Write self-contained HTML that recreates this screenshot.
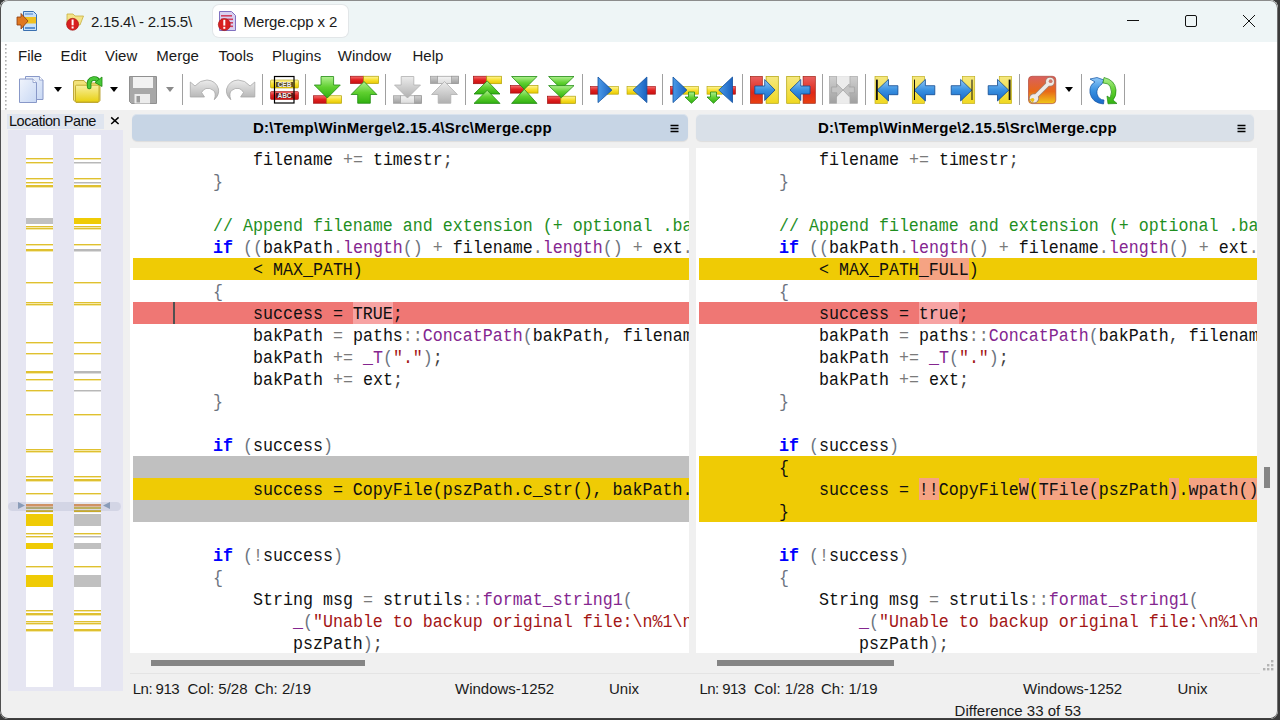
<!DOCTYPE html><html><head><meta charset="utf-8"><style>
*{box-sizing:border-box}
html,body{margin:0;padding:0;width:1280px;height:720px;overflow:hidden;background:#3a3a3a}
body{position:relative;font-family:"Liberation Sans",sans-serif}
.win{position:absolute;left:0;top:0;width:1278px;height:719px;background:#f0f0f0;border-radius:8px;overflow:hidden}
.frame{position:absolute;left:0;top:0;width:1278px;height:719px;border-radius:8px;border:1px solid #7a7a7a;border-top-color:#8c8c8c;border-bottom-color:#404040;border-right-color:#707070;border-left-color:#505050}
.abs{position:absolute}
.title{position:absolute;left:0;top:0;width:1280px;height:42px;background:#eef5f6}
.menu{position:absolute;left:0;top:42px;width:1280px;height:68px;background:#ffffff}
.mi{position:absolute;top:47px;font-size:15px;color:#1a1a1a;white-space:pre;line-height:18px}
.sep{position:absolute;top:74px;width:1px;height:31px;background:#a0a0a0}
.dd{position:absolute;top:87px;width:0;height:0;border-left:4.5px solid transparent;border-right:4.5px solid transparent;border-top:5px solid #000}
.code{position:absolute;background:#fff;overflow:hidden}
.band{position:absolute;left:3px;right:0;height:22px}
.wd{position:absolute;height:22px}
.caret{position:absolute;width:2px;height:22px;background:#505050}
.ln{position:absolute;height:22px;line-height:22px;font-family:"Liberation Mono",monospace;font-size:18.8px;white-space:pre;color:#101010;transform:scaleX(0.88638);transform-origin:0 0}
.ln i{font-style:normal}
.kw{color:#0000ff;font-weight:bold}
.op{color:#7a7a7a}
.sc{color:#404040}
.pr{color:#6c7480}
.fn{color:#84268f}
.cm{color:#1f8f1f}
.st{color:#a31515}
.id{color:#101010}
.dl .kw{color:#101010}
.hdr{position:absolute;top:114px;height:27px;border-radius:5px;box-shadow:inset 0 1px 0 rgba(255,255,255,0.35),0 1px 1px rgba(0,0,0,0.08);font-weight:bold;font-size:15px;letter-spacing:0.3px;line-height:28px;text-align:center;color:#000;white-space:pre;padding-right:15px}
.st1{position:absolute;font-size:15px;color:#1a1a1a;white-space:pre;line-height:18px}
</style></head><body><div class="win">
<div class="title"></div><div class="menu"></div>
<svg class="abs" style="left:0;top:0" width="360" height="42" viewBox="0 0 360 42"><path d="M23.5,11.5 H33.5 L36.5,14.5 V30.5 H23.5 Z" fill="#c8e0f8" stroke="#3a70b0" stroke-width="1"/><rect x="25" y="13" width="8" height="2" fill="#88b0e0"/><rect x="25" y="27" width="10" height="2" fill="#5a90d0"/><rect x="24" y="17" width="12" height="6.5" fill="#f0c020"/><path d="M17,17 H21 V13.5 L28,21 L21,29 V25 H17 Z" fill="#e07820" stroke="#8a3a10" stroke-width="0.8"/><path d="M67,14 H73 L75,16 H83.5 L80,25 H67 Z" fill="#f4e48a" stroke="#c8b040" stroke-width="0.8"/><circle cx="72.6" cy="24.3" r="6" fill="#d82020" stroke="#a01010" stroke-width="0.6"/><rect x="71.6" y="19.5" width="2" height="5.8" fill="#fff"/><rect x="71.6" y="26.5" width="2" height="2" fill="#fff"/></svg><div class="abs" style="left:212.5px;top:4.5px;width:135px;height:32.5px;background:#fff;border-radius:6px;box-shadow:0 0 0 1px #e2e6e8"></div><svg class="abs" style="left:0;top:0" width="360" height="42" viewBox="0 0 360 42"><path d="M219.5,11.5 H231.5 L235.5,15.5 V30.5 H219.5 Z" fill="#d8d0f0" stroke="#8070c0" stroke-width="1"/><rect x="221" y="15" width="11" height="1.6" fill="#d04060"/><rect x="221" y="18.5" width="12" height="1.6" fill="#d04060"/><rect x="226" y="22" width="7" height="1.6" fill="#d04060"/><rect x="226" y="25.5" width="7" height="1.6" fill="#d04060"/><circle cx="224.3" cy="24.6" r="6" fill="#d82020" stroke="#a01010" stroke-width="0.6"/><rect x="223.3" y="19.8" width="2" height="5.8" fill="#fff"/><rect x="223.3" y="26.8" width="2" height="2" fill="#fff"/></svg>
<div class="abs" style="left:91px;top:13px;font-size:15px;letter-spacing:-0.25px;line-height:18px;color:#1a1a1a;white-space:pre">2.15.4\ - 2.15.5\</div>
<div class="abs" style="left:243.5px;top:12.5px;font-size:15px;letter-spacing:-0.1px;line-height:18px;color:#1a1a1a;white-space:pre">Merge.cpp x 2</div>
<svg class="abs" style="left:1100px;top:0" width="180" height="42"><rect x="1127" y="20" width="12" height="1" fill="#111" transform="translate(-1100,0)"/><rect x="85.5" y="15.5" width="11" height="11" rx="1.5" fill="none" stroke="#111" stroke-width="1"/><path d="M143,15 L155,27 M155,15 L143,27" stroke="#111" stroke-width="1"/></svg>
<svg class="abs" style="left:0;top:0" width="1280" height="110" viewBox="0 0 1280 110">
<defs>
<linearGradient id="gRed" x1="0" y1="0" x2="0" y2="1"><stop offset="0" stop-color="#f57070"/><stop offset="0.5" stop-color="#e02020"/><stop offset="1" stop-color="#c81010"/></linearGradient>
<linearGradient id="gYel" x1="0" y1="0" x2="0" y2="1"><stop offset="0" stop-color="#fff59a"/><stop offset="0.5" stop-color="#f8e030"/><stop offset="1" stop-color="#e8c800"/></linearGradient>
<linearGradient id="gRedV" x1="0" y1="0" x2="0" y2="1"><stop offset="0" stop-color="#e86060"/><stop offset="0.6" stop-color="#e02818"/><stop offset="1" stop-color="#e84010"/></linearGradient>
<linearGradient id="gYelV" x1="0" y1="0" x2="0" y2="1"><stop offset="0" stop-color="#f5e880"/><stop offset="1" stop-color="#f0d820"/></linearGradient>
<linearGradient id="gGreen" x1="0" y1="0" x2="0" y2="1"><stop offset="0" stop-color="#b0f090"/><stop offset="0.5" stop-color="#60d030"/><stop offset="1" stop-color="#30b010"/></linearGradient>
<linearGradient id="gBlue" x1="0" y1="0" x2="0" y2="1"><stop offset="0" stop-color="#90c8f8"/><stop offset="0.5" stop-color="#3890e0"/><stop offset="1" stop-color="#1868c8"/></linearGradient>
<linearGradient id="gBlueH" x1="0" y1="0" x2="1" y2="0"><stop offset="0" stop-color="#4a9ae8"/><stop offset="1" stop-color="#1a62c0"/></linearGradient>
<linearGradient id="gGray" x1="0" y1="0" x2="0" y2="1"><stop offset="0" stop-color="#d0d0d0"/><stop offset="1" stop-color="#a0a0a0"/></linearGradient>
<linearGradient id="gGrayL" x1="0" y1="0" x2="0" y2="1"><stop offset="0" stop-color="#f4f4f4"/><stop offset="1" stop-color="#dcdcdc"/></linearGradient>
<linearGradient id="gGrayA" x1="0" y1="0" x2="0" y2="1"><stop offset="0" stop-color="#ececec"/><stop offset="1" stop-color="#b0b0b0"/></linearGradient>
<linearGradient id="gTools" x1="0" y1="0" x2="0" y2="1"><stop offset="0" stop-color="#d86060"/><stop offset="0.55" stop-color="#e86818"/><stop offset="1" stop-color="#f0c818"/></linearGradient>
<linearGradient id="gDoc" x1="0" y1="0" x2="1" y2="1"><stop offset="0" stop-color="#f0f4fc"/><stop offset="1" stop-color="#c8d8f4"/></linearGradient>
<linearGradient id="gFold" x1="0" y1="0" x2="0" y2="1"><stop offset="0" stop-color="#f8f0a0"/><stop offset="1" stop-color="#e8d010"/></linearGradient>
</defs><path d="M25.5,76.5 H39.5 L43,80 V99.5 H25.5 Z" fill="url(#gDoc)" stroke="#8898c8" stroke-width="1"/><path d="M39.5,76.5 V80 H43" fill="#fff" stroke="#8898c8" stroke-width="0.8"/><path d="M19.5,79 H33 L36.5,82.5 V102.5 H19.5 Z" fill="url(#gDoc)" stroke="#8898c8" stroke-width="1"/><path d="M33,79 V82.5 H36.5" fill="#fff" stroke="#8898c8" stroke-width="0.8"/><path d="M73.5,82 Q73.5,80.5 75,80.5 H84 L86,83 H98.5 Q100,83 100,84.5 V100.5 L98,102.5 H76 L73.5,100 Z" fill="#f2e27a" stroke="#b8a030" stroke-width="0.9"/><rect x="75.5" y="85.2" width="23.5" height="16.8" rx="1" fill="url(#gFold)" stroke="#c0a828" stroke-width="0.9"/><path d="M89.2,87 Q88,79.5 93.5,78.5 Q97.5,78 98.5,82" fill="none" stroke="#208a10" stroke-width="4.6" stroke-linecap="round"/><path d="M89.2,87 Q88,79.5 93.5,78.5 Q97.5,78 98.5,82" fill="none" stroke="#48c838" stroke-width="3" stroke-linecap="round"/><polygon points="95,82.5 102,77 102,86.5" fill="#48c838" stroke="#208a10" stroke-width="0.8" stroke-linejoin="round"/><path d="M129.5,76.5 H156.5 V103.5 H131.5 L129.5,101.5 Z" fill="#a8a8a8" stroke="#909090" stroke-width="1"/><rect x="133" y="77" width="20" height="11" fill="#f2f2f2"/><rect x="134.5" y="94" width="15.5" height="9.5" fill="#ececec"/><rect x="136.5" y="96" width="3.5" height="6.5" fill="#9a9a9a"/><path d="M190.3,82 L195,86 Q200,80 207,80 Q216,80.5 218.5,89 Q219.5,95 214.3,99.7 Q216.5,93 213.5,90.5 Q210,87.5 206,88.5 Q203,89.5 201.6,92.5 L204.5,97 L190.3,97 Z" fill="url(#gGrayA)" stroke="#a8a8a8" stroke-width="0.8"/><path d="M190.3,82 L195,86 Q200,80 207,80 Q216,80.5 218.5,89 Q219.5,95 214.3,99.7 Q216.5,93 213.5,90.5 Q210,87.5 206,88.5 Q203,89.5 201.6,92.5 L204.5,97 L190.3,97 Z" transform="translate(445.1,0) scale(-1,1)" fill="url(#gGrayA)" stroke="#a8a8a8" stroke-width="0.8"/><rect x="270.5" y="80" width="28" height="8" rx="1" fill="url(#gYel)" stroke="#b0a000" stroke-width="0.6"/><rect x="270.5" y="91.5" width="28" height="8" rx="1" fill="url(#gRed)" stroke="#a01010" stroke-width="0.6"/><rect x="276" y="82" width="17" height="5" fill="#605020"/><rect x="276" y="93" width="17" height="5" fill="#601818"/><text x="284.5" y="87" font-family="Liberation Sans" font-weight="bold" font-size="6.5" fill="#f0f0f0" text-anchor="middle">CEB</text><text x="284.5" y="98.3" font-family="Liberation Sans" font-weight="bold" font-size="6.5" fill="#f0f0f0" text-anchor="middle">ABC</text><rect x="274.5" y="76.5" width="19.5" height="26.5" fill="none" stroke="#000" stroke-width="1.2"/><rect x="313.5" y="95.75" width="13.25" height="7.5" fill="url(#gRed)" stroke="#a01010" stroke-width="0.7"/><rect x="326.75" y="95.75" width="14.75" height="7.5" fill="url(#gYel)" stroke="#b0a000" stroke-width="0.7"/><polygon points="321.0,76.5 333.6,76.5 333.6,85 340.3,85 327.3,98 314.3,85 321.0,85" fill="url(#gGreen)" stroke="#208a10" stroke-width="0.8" stroke-linejoin="round"/><rect x="350.5" y="76.25" width="13.100000000000023" height="7.25" fill="url(#gRed)" stroke="#a01010" stroke-width="0.7"/><rect x="363.6" y="76.25" width="14.899999999999977" height="7.25" fill="url(#gYel)" stroke="#b0a000" stroke-width="0.7"/><polygon points="364,81.5 376.9,94.5 370.3,94.5 370.3,103.25 357.7,103.25 357.7,94.5 351.1,94.5" fill="url(#gGreen)" stroke="#208a10" stroke-width="0.8" stroke-linejoin="round"/><rect x="393.5" y="95.75" width="7.0" height="7.5" fill="url(#gGray)" stroke="#9a9a9a" stroke-width="0.7"/><rect x="400.5" y="95.75" width="21.0" height="7.5" fill="url(#gGrayL)" stroke="#9a9a9a" stroke-width="0.7"/><rect x="414.5" y="95.75" width="7" height="7.5" fill="url(#gGray)" stroke="#9a9a9a" stroke-width="0.7"/><polygon points="401.2,76.5 413.8,76.5 413.8,85 420.5,85 407.5,98 394.5,85 401.2,85" fill="url(#gGrayA)" stroke="#b0b0b0" stroke-width="0.8" stroke-linejoin="round"/><rect x="430.5" y="76.25" width="7.0" height="7.25" fill="url(#gGray)" stroke="#9a9a9a" stroke-width="0.7"/><rect x="437.5" y="76.25" width="21.0" height="7.25" fill="url(#gGrayL)" stroke="#9a9a9a" stroke-width="0.7"/><rect x="451.5" y="76.25" width="7" height="7.25" fill="url(#gGray)" stroke="#9a9a9a" stroke-width="0.7"/><polygon points="444.5,81.5 457.4,94.5 450.8,94.5 450.8,103.25 438.2,103.25 438.2,94.5 431.6,94.5" fill="url(#gGrayA)" stroke="#b0b0b0" stroke-width="0.8" stroke-linejoin="round"/><rect x="473.5" y="76.25" width="13.199999999999989" height="7.450000000000003" fill="url(#gRed)" stroke="#a01010" stroke-width="0.7"/><rect x="486.7" y="76.25" width="14.800000000000011" height="7.450000000000003" fill="url(#gYel)" stroke="#b0a000" stroke-width="0.7"/><polygon points="487.2,80.9 500,94 474,94" fill="url(#gGreen)" stroke="#208a10" stroke-width="0.8" stroke-linejoin="round"/><polygon points="487.2,90.3 500,103.4 474,103.4" fill="url(#gGreen)" stroke="#208a10" stroke-width="0.8" stroke-linejoin="round"/><rect x="510.5" y="85.6" width="13.5" height="7.5" fill="url(#gRed)" stroke="#a01010" stroke-width="0.7"/><rect x="524" y="85.6" width="14" height="7.5" fill="url(#gYel)" stroke="#b0a000" stroke-width="0.7"/><polygon points="511.6,76.5 537,76.5 524.3,89.3" fill="url(#gGreen)" stroke="#208a10" stroke-width="0.8" stroke-linejoin="round"/><polygon points="524.3,89.3 537,103.4 511.6,103.4" fill="url(#gGreen)" stroke="#208a10" stroke-width="0.8" stroke-linejoin="round"/><rect x="547.5" y="96.2" width="13.299999999999955" height="7.200000000000003" fill="url(#gRed)" stroke="#a01010" stroke-width="0.7"/><rect x="560.8" y="96.2" width="14.700000000000045" height="7.200000000000003" fill="url(#gYel)" stroke="#b0a000" stroke-width="0.7"/><polygon points="548.6,76.5 574,76.5 561.25,88.9" fill="url(#gGreen)" stroke="#208a10" stroke-width="0.8" stroke-linejoin="round"/><polygon points="548.6,85.6 574,85.6 561.25,97.8" fill="url(#gGreen)" stroke="#208a10" stroke-width="0.8" stroke-linejoin="round"/><rect x="590.5" y="86.4" width="12" height="7.8" fill="url(#gRed)" stroke="#a01010" stroke-width="0.6"/><rect x="607" y="86.4" width="11.5" height="7.8" fill="url(#gYel)" stroke="#b0a000" stroke-width="0.6"/><polygon points="598,77 611.9,90.1 598,102.6" fill="url(#gBlueH)" stroke="#1050a0" stroke-width="0.8" stroke-linejoin="round"/><rect x="627" y="86.4" width="11.5" height="7.8" fill="url(#gYel)" stroke="#b0a000" stroke-width="0.6"/><rect x="643" y="86.4" width="12.5" height="7.8" fill="url(#gRed)" stroke="#a01010" stroke-width="0.6"/><polygon points="646.9,77 633.1,90.1 646.9,102.6" fill="url(#gBlueH)" stroke="#1050a0" stroke-width="0.8" stroke-linejoin="round"/><rect x="670.5" y="86.4" width="8" height="7.8" fill="url(#gRed)" stroke="#a01010" stroke-width="0.6"/><rect x="683" y="86.4" width="15.5" height="7.8" fill="url(#gYel)" stroke="#b0a000" stroke-width="0.6"/><polygon points="673,77 686.9,90.1 673,102.6" fill="url(#gBlueH)" stroke="#1050a0" stroke-width="0.8" stroke-linejoin="round"/><polygon points="688.5,92 694.5,92 694.5,97 698.0,97 691.5,103.3 685.0,97 688.5,97" fill="url(#gGreen)" stroke="#208a10" stroke-width="0.8" stroke-linejoin="round"/><rect x="707" y="86.4" width="15.5" height="7.8" fill="url(#gYel)" stroke="#b0a000" stroke-width="0.6"/><rect x="728" y="86.4" width="7.5" height="7.8" fill="url(#gRed)" stroke="#a01010" stroke-width="0.6"/><polygon points="732.5,77 718.75,90.1 732.5,102.6" fill="url(#gBlueH)" stroke="#1050a0" stroke-width="0.8" stroke-linejoin="round"/><polygon points="710.5,92 716.5,92 716.5,97 720.0,97 713.5,103.3 707.0,97 710.5,97" fill="url(#gGreen)" stroke="#208a10" stroke-width="0.8" stroke-linejoin="round"/><rect x="750.5" y="76.5" width="11.8" height="26.8" fill="url(#gRedV)" stroke="#a02010" stroke-width="0.7"/><rect x="766.1" y="76.5" width="12.2" height="26.8" fill="url(#gYelV)" stroke="#b0a000" stroke-width="0.7"/><polygon points="754.8,86 764.7,86 764.7,79.5 775,90 764.7,100.5 764.7,94 754.8,94" fill="url(#gBlue)" stroke="#104a90" stroke-width="0.8" stroke-linejoin="round"/><rect x="786.7" y="76.5" width="13.1" height="26.8" fill="url(#gYelV)" stroke="#b0a000" stroke-width="0.7"/><rect x="803.1" y="76.5" width="12.2" height="26.8" fill="url(#gRedV)" stroke="#a02010" stroke-width="0.7"/><polygon points="810,86 800.8,86 800.8,79.5 790,90 800.8,100.5 800.8,94 810,94" fill="url(#gBlue)" stroke="#104a90" stroke-width="0.8" stroke-linejoin="round"/><rect x="836.6" y="76.5" width="13.4" height="26.8" fill="#ececec" stroke="#dcdcdc" stroke-width="0.6"/><rect x="829.5" y="76.5" width="7.1" height="26.8" fill="url(#gGray)" stroke="#a8a8a8" stroke-width="0.7"/><rect x="850" y="76.5" width="7.5" height="26.8" fill="url(#gGray)" stroke="#a8a8a8" stroke-width="0.7"/><polygon points="831.6,87 836.8,87 836.8,84 843,90 836.8,96.5 836.8,92.75 831.6,92.75" fill="#c4c4c4" stroke="#a0a0a0" stroke-width="0.7" stroke-linejoin="round"/><polygon points="854.4,87 849.2,87 849.2,84 843,90 849.2,96.5 849.2,92.75 854.4,92.75" fill="#c4c4c4" stroke="#a0a0a0" stroke-width="0.7" stroke-linejoin="round"/><rect x="875" y="76.5" width="12.299999999999955" height="27" fill="url(#gYelV)" stroke="#c0b020" stroke-width="0.7"/><polygon points="897.9,85.7 888.5,85.7 888.5,79.4 877.1,90.2 888.5,101.0 888.5,94.7 897.9,94.7" fill="url(#gBlue)" stroke="#104a90" stroke-width="0.8" stroke-linejoin="round"/><rect x="876" y="79.6" width="1.8" height="20.4" fill="#101010"/><rect x="912.3" y="76.5" width="12.200000000000045" height="27" fill="url(#gYelV)" stroke="#c0b020" stroke-width="0.7"/><polygon points="934.8,85.7 925.4,85.7 925.4,79.4 914.3,90.2 925.4,101.0 925.4,94.7 934.8,94.7" fill="url(#gBlue)" stroke="#104a90" stroke-width="0.8" stroke-linejoin="round"/><rect x="914" y="79.6" width="1" height="20.4" fill="#101010"/><rect x="962.4" y="76.5" width="12.300000000000068" height="27" fill="url(#gYelV)" stroke="#c0b020" stroke-width="0.7"/><polygon points="951.2,85.7 960.6,85.7 960.6,79.4 971.75,90.2 960.6,101.0 960.6,94.7 951.2,94.7" fill="url(#gBlue)" stroke="#104a90" stroke-width="0.8" stroke-linejoin="round"/><rect x="971.5" y="79.6" width="1" height="20.4" fill="#101010"/><rect x="999.3" y="76.5" width="12.300000000000068" height="27" fill="url(#gYelV)" stroke="#c0b020" stroke-width="0.7"/><polygon points="988.2,85.7 997.5,85.7 997.5,79.4 1008.7,90.2 997.5,101.0 997.5,94.7 988.2,94.7" fill="url(#gBlue)" stroke="#104a90" stroke-width="0.8" stroke-linejoin="round"/><rect x="1008.7" y="79.6" width="1.8" height="20.4" fill="#101010"/><rect x="1028.5" y="76.3" width="27.3" height="27.3" rx="3.5" fill="url(#gTools)" stroke="#b04838" stroke-width="0.7"/><path d="M1035,97 L1049.5,82.5" stroke="#a08070" stroke-width="5" stroke-linecap="round"/><circle cx="1050" cy="81.8" r="4.8" fill="#a08070"/><circle cx="1034" cy="98.4" r="5" fill="#a08070"/><path d="M1035,97 L1049.5,82.5" stroke="#eeeae6" stroke-width="3.6" stroke-linecap="round"/><circle cx="1050" cy="81.8" r="4" fill="#eeeae6"/><circle cx="1034" cy="98.4" r="4.2" fill="#eeeae6"/><circle cx="1050.6" cy="81.2" r="1.9" fill="#d07868"/><path d="M1029.5,99 L1033.5,98.8 L1033.2,103 Z" fill="#f0c018"/><circle cx="1032.6" cy="99.8" r="1.8" fill="#f0c018"/><path d="M1097,77.5 L1104,80 L1102,84 Q1096,88 1097,94 Q1099,100 1104,100 L1103.5,104 Q1092,103 1090,93 Q1089,85 1095,82 L1090,79 Z" fill="url(#gBlue)" stroke="#1050a0" stroke-width="0.7"/><path d="M1104,77.5 Q1115,80 1116,90 Q1116.5,96 1113,100 L1117,103.5 L1108,103.8 L1107,96 L1110,98 Q1113,92 1110,86 Q1108,83 1103,83 Z" fill="url(#gGreen)" stroke="#208a10" stroke-width="0.7"/></svg>
<svg class="abs" style="left:0;top:0" width="20" height="112"><rect x="5" y="44" width="1.6" height="1.6" fill="#b0b0b0"/><rect x="5" y="48" width="1.6" height="1.6" fill="#b0b0b0"/><rect x="5" y="52" width="1.6" height="1.6" fill="#b0b0b0"/><rect x="5" y="56" width="1.6" height="1.6" fill="#b0b0b0"/><rect x="5" y="60" width="1.6" height="1.6" fill="#b0b0b0"/><rect x="5" y="64" width="1.6" height="1.6" fill="#b0b0b0"/><rect x="5" y="68" width="1.6" height="1.6" fill="#b0b0b0"/><rect x="5" y="72" width="1.6" height="1.6" fill="#b0b0b0"/><rect x="5" y="76" width="1.6" height="1.6" fill="#b0b0b0"/><rect x="5" y="80" width="1.6" height="1.6" fill="#b0b0b0"/><rect x="5" y="84" width="1.6" height="1.6" fill="#b0b0b0"/><rect x="5" y="88" width="1.6" height="1.6" fill="#b0b0b0"/><rect x="5" y="92" width="1.6" height="1.6" fill="#b0b0b0"/><rect x="5" y="96" width="1.6" height="1.6" fill="#b0b0b0"/><rect x="5" y="100" width="1.6" height="1.6" fill="#b0b0b0"/><rect x="5" y="104" width="1.6" height="1.6" fill="#b0b0b0"/><rect x="5" y="108" width="1.6" height="1.6" fill="#b0b0b0"/></svg>
<svg class="abs" style="left:1258px;top:655px" width="20" height="20"><rect x="13" y="5" width="2.4" height="2.4" fill="#b4b4b4"/><rect x="9" y="9" width="2.4" height="2.4" fill="#b4b4b4"/><rect x="13" y="9" width="2.4" height="2.4" fill="#b4b4b4"/><rect x="5" y="13" width="2.4" height="2.4" fill="#b4b4b4"/><rect x="9" y="13" width="2.4" height="2.4" fill="#b4b4b4"/><rect x="13" y="13" width="2.4" height="2.4" fill="#b4b4b4"/></svg>
<div class="mi" style="left:18px">File</div>
<div class="mi" style="left:60.5px">Edit</div>
<div class="mi" style="left:105px">View</div>
<div class="mi" style="left:156.3px">Merge</div>
<div class="mi" style="left:218.5px">Tools</div>
<div class="mi" style="left:272px">Plugins</div>
<div class="mi" style="left:337.8px">Window</div>
<div class="mi" style="left:412.5px">Help</div>
<div class="sep" style="left:182px"></div>
<div class="sep" style="left:262px"></div>
<div class="sep" style="left:305px"></div>
<div class="sep" style="left:385px"></div>
<div class="sep" style="left:465px"></div>
<div class="sep" style="left:582px"></div>
<div class="sep" style="left:662px"></div>
<div class="sep" style="left:742px"></div>
<div class="sep" style="left:822px"></div>
<div class="sep" style="left:865px"></div>
<div class="sep" style="left:1019px"></div>
<div class="sep" style="left:1081px"></div>
<div class="sep" style="left:1124px"></div>
<div class="dd" style="left:54px"></div>
<div class="dd" style="left:110px"></div>
<div class="dd" style="left:166px;border-top-color:#8a8a8a"></div>
<div class="dd" style="left:1065px"></div>
<div class="abs" style="left:8px;top:130px;width:115px;height:561px;background:#e6e6f2"></div>
<div class="abs" style="left:7px;top:113.5px;width:97px;height:15px;background:#dfe5ef"></div>
<div class="abs" style="left:9px;top:111.5px;font-size:14.5px;letter-spacing:-0.45px;line-height:18px;color:#111;white-space:pre">Location Pane</div>
<svg class="abs" style="left:0;top:0" width="130" height="130"><path d="M111.2,117.4 L118.6,124 M118.6,117.4 L111.2,124" stroke="#000" stroke-width="1.5"/></svg>
<div class="abs" style="left:26px;top:135px;width:27px;height:552px;background:#fff"></div>
<div class="abs" style="left:74px;top:135px;width:27px;height:552px;background:#fff"></div>
<div class="abs" style="left:26px;top:158px;width:27px;height:1px;background:#dfc030"></div><div class="abs" style="left:26px;top:159px;width:27px;height:1px;background:#f4e8a8"></div><div class="abs" style="left:74px;top:158px;width:27px;height:1px;background:#dfc030"></div><div class="abs" style="left:74px;top:159px;width:27px;height:1px;background:#f4e8a8"></div><div class="abs" style="left:26px;top:162px;width:27px;height:1px;background:#dfc030"></div><div class="abs" style="left:26px;top:163px;width:27px;height:1px;background:#f4e8a8"></div><div class="abs" style="left:74px;top:162px;width:27px;height:1px;background:#b8b8b8"></div><div class="abs" style="left:74px;top:163px;width:27px;height:1px;background:#dcdcdc"></div><div class="abs" style="left:26px;top:178px;width:27px;height:1px;background:#dfc030"></div><div class="abs" style="left:26px;top:179px;width:27px;height:1px;background:#f4e8a8"></div><div class="abs" style="left:74px;top:178px;width:27px;height:1px;background:#dfc030"></div><div class="abs" style="left:74px;top:179px;width:27px;height:1px;background:#f4e8a8"></div><div class="abs" style="left:26px;top:182px;width:27px;height:1px;background:#dfc030"></div><div class="abs" style="left:26px;top:183px;width:27px;height:1px;background:#f4e8a8"></div><div class="abs" style="left:74px;top:182px;width:27px;height:1px;background:#b8b8b8"></div><div class="abs" style="left:74px;top:183px;width:27px;height:1px;background:#dcdcdc"></div><div class="abs" style="left:26px;top:185px;width:27px;height:2px;background:#dfc030"></div><div class="abs" style="left:26px;top:187px;width:27px;height:1px;background:#f4e8a8"></div><div class="abs" style="left:74px;top:185px;width:27px;height:2px;background:#dfc030"></div><div class="abs" style="left:74px;top:187px;width:27px;height:1px;background:#f4e8a8"></div><div class="abs" style="left:26px;top:218px;width:27px;height:6px;background:#c0c0c0"></div><div class="abs" style="left:74px;top:218px;width:27px;height:6px;background:#efcb05"></div><div class="abs" style="left:26px;top:226px;width:27px;height:1px;background:#dfc030"></div><div class="abs" style="left:26px;top:227px;width:27px;height:1px;background:#f4e8a8"></div><div class="abs" style="left:74px;top:226px;width:27px;height:1px;background:#dfc030"></div><div class="abs" style="left:74px;top:227px;width:27px;height:1px;background:#f4e8a8"></div><div class="abs" style="left:26px;top:228px;width:27px;height:1px;background:#dfc030"></div><div class="abs" style="left:26px;top:229px;width:27px;height:1px;background:#f4e8a8"></div><div class="abs" style="left:74px;top:228px;width:27px;height:1px;background:#dfc030"></div><div class="abs" style="left:74px;top:229px;width:27px;height:1px;background:#f4e8a8"></div><div class="abs" style="left:26px;top:244px;width:27px;height:1px;background:#dfc030"></div><div class="abs" style="left:26px;top:245px;width:27px;height:1px;background:#f4e8a8"></div><div class="abs" style="left:74px;top:244px;width:27px;height:1px;background:#dfc030"></div><div class="abs" style="left:74px;top:245px;width:27px;height:1px;background:#f4e8a8"></div><div class="abs" style="left:26px;top:249px;width:27px;height:2px;background:#dfc030"></div><div class="abs" style="left:26px;top:251px;width:27px;height:1px;background:#f4e8a8"></div><div class="abs" style="left:74px;top:249px;width:27px;height:2px;background:#b8b8b8"></div><div class="abs" style="left:74px;top:251px;width:27px;height:1px;background:#dcdcdc"></div><div class="abs" style="left:26px;top:282px;width:27px;height:1px;background:#dfc030"></div><div class="abs" style="left:26px;top:283px;width:27px;height:1px;background:#f4e8a8"></div><div class="abs" style="left:74px;top:282px;width:27px;height:1px;background:#dfc030"></div><div class="abs" style="left:74px;top:283px;width:27px;height:1px;background:#f4e8a8"></div><div class="abs" style="left:26px;top:302px;width:27px;height:1px;background:#dfc030"></div><div class="abs" style="left:26px;top:303px;width:27px;height:1px;background:#f4e8a8"></div><div class="abs" style="left:74px;top:302px;width:27px;height:1px;background:#dfc030"></div><div class="abs" style="left:74px;top:303px;width:27px;height:1px;background:#f4e8a8"></div><div class="abs" style="left:26px;top:304px;width:27px;height:1px;background:#dfc030"></div><div class="abs" style="left:26px;top:305px;width:27px;height:1px;background:#f4e8a8"></div><div class="abs" style="left:74px;top:304px;width:27px;height:1px;background:#dfc030"></div><div class="abs" style="left:74px;top:305px;width:27px;height:1px;background:#f4e8a8"></div><div class="abs" style="left:26px;top:342px;width:27px;height:1px;background:#dfc030"></div><div class="abs" style="left:26px;top:343px;width:27px;height:1px;background:#f4e8a8"></div><div class="abs" style="left:74px;top:342px;width:27px;height:1px;background:#dfc030"></div><div class="abs" style="left:74px;top:343px;width:27px;height:1px;background:#f4e8a8"></div><div class="abs" style="left:26px;top:353px;width:27px;height:1px;background:#dfc030"></div><div class="abs" style="left:26px;top:354px;width:27px;height:1px;background:#f4e8a8"></div><div class="abs" style="left:74px;top:353px;width:27px;height:1px;background:#dfc030"></div><div class="abs" style="left:74px;top:354px;width:27px;height:1px;background:#f4e8a8"></div><div class="abs" style="left:26px;top:371px;width:27px;height:2px;background:#dfc030"></div><div class="abs" style="left:26px;top:373px;width:27px;height:1px;background:#f4e8a8"></div><div class="abs" style="left:74px;top:371px;width:27px;height:2px;background:#b8b8b8"></div><div class="abs" style="left:74px;top:373px;width:27px;height:1px;background:#dcdcdc"></div><div class="abs" style="left:26px;top:379px;width:27px;height:1px;background:#dfc030"></div><div class="abs" style="left:26px;top:380px;width:27px;height:1px;background:#f4e8a8"></div><div class="abs" style="left:74px;top:379px;width:27px;height:1px;background:#dfc030"></div><div class="abs" style="left:74px;top:380px;width:27px;height:1px;background:#f4e8a8"></div><div class="abs" style="left:26px;top:390px;width:27px;height:1px;background:#dfc030"></div><div class="abs" style="left:26px;top:391px;width:27px;height:1px;background:#f4e8a8"></div><div class="abs" style="left:74px;top:390px;width:27px;height:1px;background:#b8b8b8"></div><div class="abs" style="left:74px;top:391px;width:27px;height:1px;background:#dcdcdc"></div><div class="abs" style="left:26px;top:414px;width:27px;height:1px;background:#dfc030"></div><div class="abs" style="left:26px;top:415px;width:27px;height:1px;background:#f4e8a8"></div><div class="abs" style="left:74px;top:414px;width:27px;height:1px;background:#dfc030"></div><div class="abs" style="left:74px;top:415px;width:27px;height:1px;background:#f4e8a8"></div><div class="abs" style="left:26px;top:449px;width:27px;height:1px;background:#dfc030"></div><div class="abs" style="left:26px;top:450px;width:27px;height:1px;background:#f4e8a8"></div><div class="abs" style="left:74px;top:449px;width:27px;height:1px;background:#dfc030"></div><div class="abs" style="left:74px;top:450px;width:27px;height:1px;background:#f4e8a8"></div><div class="abs" style="left:26px;top:451px;width:27px;height:1px;background:#dfc030"></div><div class="abs" style="left:26px;top:452px;width:27px;height:1px;background:#f4e8a8"></div><div class="abs" style="left:74px;top:451px;width:27px;height:1px;background:#dfc030"></div><div class="abs" style="left:74px;top:452px;width:27px;height:1px;background:#f4e8a8"></div><div class="abs" style="left:26px;top:476px;width:27px;height:1px;background:#dfc030"></div><div class="abs" style="left:26px;top:477px;width:27px;height:1px;background:#f4e8a8"></div><div class="abs" style="left:74px;top:476px;width:27px;height:1px;background:#dfc030"></div><div class="abs" style="left:74px;top:477px;width:27px;height:1px;background:#f4e8a8"></div><div class="abs" style="left:26px;top:479px;width:27px;height:2px;background:#dfc030"></div><div class="abs" style="left:26px;top:481px;width:27px;height:1px;background:#f4e8a8"></div><div class="abs" style="left:74px;top:479px;width:27px;height:2px;background:#dfc030"></div><div class="abs" style="left:74px;top:481px;width:27px;height:1px;background:#f4e8a8"></div><div class="abs" style="left:26px;top:493px;width:27px;height:1px;background:#dfc030"></div><div class="abs" style="left:26px;top:494px;width:27px;height:1px;background:#f4e8a8"></div><div class="abs" style="left:74px;top:493px;width:27px;height:1px;background:#dfc030"></div><div class="abs" style="left:74px;top:494px;width:27px;height:1px;background:#f4e8a8"></div><div class="abs" style="left:26px;top:504px;width:27px;height:2px;background:#e0863a"></div><div class="abs" style="left:26px;top:506px;width:27px;height:1px;background:#f0c090"></div><div class="abs" style="left:74px;top:504px;width:27px;height:2px;background:#e0863a"></div><div class="abs" style="left:74px;top:506px;width:27px;height:1px;background:#f0c090"></div><div class="abs" style="left:26px;top:507px;width:27px;height:2px;background:#b0a458"></div><div class="abs" style="left:26px;top:509px;width:27px;height:1px;background:#eee"></div><div class="abs" style="left:74px;top:507px;width:27px;height:2px;background:#c8b030"></div><div class="abs" style="left:74px;top:509px;width:27px;height:1px;background:#eee"></div><div class="abs" style="left:26px;top:510px;width:27px;height:2px;background:#c8aa28"></div><div class="abs" style="left:26px;top:512px;width:27px;height:1px;background:#eee"></div><div class="abs" style="left:74px;top:510px;width:27px;height:2px;background:#c8aa28"></div><div class="abs" style="left:74px;top:512px;width:27px;height:1px;background:#eee"></div><div class="abs" style="left:26px;top:514px;width:27px;height:12px;background:#efcb05"></div><div class="abs" style="left:74px;top:514px;width:27px;height:12px;background:#c0c0c0"></div><div class="abs" style="left:26px;top:533px;width:27px;height:1px;background:#dfc030"></div><div class="abs" style="left:26px;top:534px;width:27px;height:1px;background:#f4e8a8"></div><div class="abs" style="left:74px;top:533px;width:27px;height:1px;background:#dfc030"></div><div class="abs" style="left:74px;top:534px;width:27px;height:1px;background:#f4e8a8"></div><div class="abs" style="left:26px;top:536px;width:27px;height:1px;background:#dfc030"></div><div class="abs" style="left:26px;top:537px;width:27px;height:1px;background:#f4e8a8"></div><div class="abs" style="left:74px;top:536px;width:27px;height:1px;background:#b8b8b8"></div><div class="abs" style="left:74px;top:537px;width:27px;height:1px;background:#dcdcdc"></div><div class="abs" style="left:26px;top:543px;width:27px;height:6px;background:#efcb05"></div><div class="abs" style="left:74px;top:543px;width:27px;height:6px;background:#c0c0c0"></div><div class="abs" style="left:26px;top:566px;width:27px;height:1px;background:#dfc030"></div><div class="abs" style="left:26px;top:567px;width:27px;height:1px;background:#f4e8a8"></div><div class="abs" style="left:74px;top:566px;width:27px;height:1px;background:#dfc030"></div><div class="abs" style="left:74px;top:567px;width:27px;height:1px;background:#f4e8a8"></div><div class="abs" style="left:26px;top:575px;width:27px;height:12px;background:#efcb05"></div><div class="abs" style="left:74px;top:575px;width:27px;height:12px;background:#c0c0c0"></div><div class="abs" style="left:26px;top:610px;width:27px;height:1px;background:#dfc030"></div><div class="abs" style="left:26px;top:611px;width:27px;height:1px;background:#f4e8a8"></div><div class="abs" style="left:74px;top:610px;width:27px;height:1px;background:#dfc030"></div><div class="abs" style="left:74px;top:611px;width:27px;height:1px;background:#f4e8a8"></div><div class="abs" style="left:26px;top:613px;width:27px;height:2px;background:#dfc030"></div><div class="abs" style="left:26px;top:615px;width:27px;height:1px;background:#f4e8a8"></div><div class="abs" style="left:74px;top:613px;width:27px;height:2px;background:#dfc030"></div><div class="abs" style="left:74px;top:615px;width:27px;height:1px;background:#f4e8a8"></div><div class="abs" style="left:26px;top:621px;width:27px;height:1px;background:#dfc030"></div><div class="abs" style="left:26px;top:622px;width:27px;height:1px;background:#f4e8a8"></div><div class="abs" style="left:74px;top:621px;width:27px;height:1px;background:#dfc030"></div><div class="abs" style="left:74px;top:622px;width:27px;height:1px;background:#f4e8a8"></div><div class="abs" style="left:26px;top:623px;width:27px;height:1px;background:#dfc030"></div><div class="abs" style="left:26px;top:624px;width:27px;height:1px;background:#f4e8a8"></div><div class="abs" style="left:74px;top:623px;width:27px;height:1px;background:#dfc030"></div><div class="abs" style="left:74px;top:624px;width:27px;height:1px;background:#f4e8a8"></div><div class="abs" style="left:26px;top:629px;width:27px;height:2px;background:#dfc030"></div><div class="abs" style="left:26px;top:631px;width:27px;height:1px;background:#f4e8a8"></div><div class="abs" style="left:74px;top:629px;width:27px;height:2px;background:#dfc030"></div><div class="abs" style="left:74px;top:631px;width:27px;height:1px;background:#f4e8a8"></div><div class="abs" style="left:8px;top:501.5px;width:113px;height:9px;border-radius:4.5px;background:rgba(170,175,200,0.3)"></div><svg class="abs" style="left:0;top:0" width="130" height="520"><path d="M18,502 L25,505.5 L18,509 Z M110,502 L103,505.5 L110,509 Z" fill="#8a9cb8"/></svg>
<div class="hdr" style="left:132px;width:556px;background:#c7d5e5">D:\Temp\WinMerge\2.15.4\Src\Merge.cpp</div>
<div class="hdr" style="left:696px;width:558px;background:#d9e0e8">D:\Temp\WinMerge\2.15.5\Src\Merge.cpp</div>
<svg class="abs" style="left:0;top:0" width="1280" height="140"><path d="M670.5,125.5 H678.5 M670.5,128.5 H678.5 M670.5,131.5 H678.5 M1237.5,125.5 H1245.5 M1237.5,128.5 H1245.5 M1237.5,131.5 H1245.5" stroke="#000" stroke-width="1.3"/></svg>
<div class="code" style="left:130px;top:148px;width:559px;height:505px">
<div class="band" style="top:110px;background:#efcb05"></div>
<div class="band" style="top:154px;background:#ef7774"></div>
<div class="band" style="top:308px;background:#c0c0c0"></div>
<div class="band" style="top:330px;background:#efcb05"></div>
<div class="band" style="top:352px;background:#c0c0c0"></div>
<div class="wd" style="top:154px;left:223px;width:40px;background:#f7a3a3"></div>
<div class="caret" style="top:154px;left:43px"></div>
<div class="ln" style="top:1px;left:83px">    <i class="id">filename</i> <i class="op">+</i><i class="op">=</i> <i class="id">timestr</i><i class="sc">;</i></div>
<div class="ln" style="top:23px;left:83px"><i class="pr">}</i></div>
<div class="ln" style="top:67px;left:83px"><i class="cm">// Append filename and extension (+ optional .backup</i></div>
<div class="ln" style="top:89px;left:83px"><i class="kw">if</i> <i class="pr">(</i><i class="pr">(</i><i class="id">bakPath</i><i class="op">.</i><i class="fn">length</i><i class="pr">(</i><i class="pr">)</i> <i class="op">+</i> <i class="id">filename</i><i class="op">.</i><i class="fn">length</i><i class="pr">(</i><i class="pr">)</i> <i class="op">+</i> <i class="id">ext</i><i class="op">.</i><i class="fn">length</i><i class="pr">(</i><i class="pr">)</i><i class="pr">)</i></div>
<div class="ln dl" style="top:111px;left:83px">    &lt; MAX_PATH)</div>
<div class="ln" style="top:133px;left:83px"><i class="pr">{</i></div>
<div class="ln dl" style="top:155px;left:83px">    success = TRUE;</div>
<div class="ln" style="top:177px;left:83px">    <i class="id">bakPath</i> <i class="op">=</i> <i class="id">paths</i><i class="op">:</i><i class="op">:</i><i class="fn">ConcatPath</i><i class="pr">(</i><i class="id">bakPath</i><i class="sc">,</i> <i class="id">filename</i><i class="pr">)</i><i class="sc">;</i></div>
<div class="ln" style="top:199px;left:83px">    <i class="id">bakPath</i> <i class="op">+</i><i class="op">=</i> <i class="fn">_T</i><i class="pr">(</i><i class="st">&quot;.&quot;</i><i class="pr">)</i><i class="sc">;</i></div>
<div class="ln" style="top:221px;left:83px">    <i class="id">bakPath</i> <i class="op">+</i><i class="op">=</i> <i class="id">ext</i><i class="sc">;</i></div>
<div class="ln" style="top:243px;left:83px"><i class="pr">}</i></div>
<div class="ln" style="top:287px;left:83px"><i class="kw">if</i> <i class="pr">(</i><i class="id">success</i><i class="pr">)</i></div>
<div class="ln dl" style="top:331px;left:83px">    success = CopyFile(pszPath.c_str(), bakPath.c_str(), FALSE);</div>
<div class="ln" style="top:397px;left:83px"><i class="kw">if</i> <i class="pr">(</i><i class="op">!</i><i class="id">success</i><i class="pr">)</i></div>
<div class="ln" style="top:419px;left:83px"><i class="pr">{</i></div>
<div class="ln" style="top:441px;left:83px">    <i class="id">String</i> <i class="id">msg</i> <i class="op">=</i> <i class="id">strutils</i><i class="op">:</i><i class="op">:</i><i class="fn">format_string1</i><i class="pr">(</i></div>
<div class="ln" style="top:463px;left:83px">        <i class="fn">_</i><i class="pr">(</i><i class="st">&quot;Unable to backup original file:\n%1\n\nContinue?&quot;</i><i class="pr">)</i><i class="sc">,</i></div>
<div class="ln" style="top:485px;left:83px">        <i class="id">pszPath</i><i class="pr">)</i><i class="sc">;</i></div>
</div>
<div class="code" style="left:696px;top:148px;width:561px;height:505px">
<div class="band" style="top:110px;background:#efcb05"></div>
<div class="band" style="top:154px;background:#ef7774"></div>
<div class="band" style="top:308px;background:#efcb05"></div>
<div class="band" style="top:330px;background:#efcb05"></div>
<div class="band" style="top:352px;background:#efcb05"></div>
<div class="wd" style="top:110px;left:223px;width:50px;background:#f5a383"></div>
<div class="wd" style="top:154px;left:223px;width:40px;background:#f7a3a3"></div>
<div class="wd" style="top:330px;left:223px;width:20px;background:#f5a383"></div>
<div class="wd" style="top:330px;left:323px;width:10px;background:#f5a383"></div>
<div class="wd" style="top:330px;left:343px;width:60px;background:#f5a383"></div>
<div class="wd" style="top:330px;left:473px;width:10px;background:#f5a383"></div>
<div class="wd" style="top:330px;left:493px;width:70px;background:#f5a383"></div>
<div class="ln" style="top:1px;left:83px">    <i class="id">filename</i> <i class="op">+</i><i class="op">=</i> <i class="id">timestr</i><i class="sc">;</i></div>
<div class="ln" style="top:23px;left:83px"><i class="pr">}</i></div>
<div class="ln" style="top:67px;left:83px"><i class="cm">// Append filename and extension (+ optional .backup</i></div>
<div class="ln" style="top:89px;left:83px"><i class="kw">if</i> <i class="pr">(</i><i class="pr">(</i><i class="id">bakPath</i><i class="op">.</i><i class="fn">length</i><i class="pr">(</i><i class="pr">)</i> <i class="op">+</i> <i class="id">filename</i><i class="op">.</i><i class="fn">length</i><i class="pr">(</i><i class="pr">)</i> <i class="op">+</i> <i class="id">ext</i><i class="op">.</i><i class="fn">length</i><i class="pr">(</i><i class="pr">)</i><i class="pr">)</i></div>
<div class="ln dl" style="top:111px;left:83px">    &lt; MAX_PATH_FULL)</div>
<div class="ln" style="top:133px;left:83px"><i class="pr">{</i></div>
<div class="ln dl" style="top:155px;left:83px">    success = true;</div>
<div class="ln" style="top:177px;left:83px">    <i class="id">bakPath</i> <i class="op">=</i> <i class="id">paths</i><i class="op">:</i><i class="op">:</i><i class="fn">ConcatPath</i><i class="pr">(</i><i class="id">bakPath</i><i class="sc">,</i> <i class="id">filename</i><i class="pr">)</i><i class="sc">;</i></div>
<div class="ln" style="top:199px;left:83px">    <i class="id">bakPath</i> <i class="op">+</i><i class="op">=</i> <i class="fn">_T</i><i class="pr">(</i><i class="st">&quot;.&quot;</i><i class="pr">)</i><i class="sc">;</i></div>
<div class="ln" style="top:221px;left:83px">    <i class="id">bakPath</i> <i class="op">+</i><i class="op">=</i> <i class="id">ext</i><i class="sc">;</i></div>
<div class="ln" style="top:243px;left:83px"><i class="pr">}</i></div>
<div class="ln" style="top:287px;left:83px"><i class="kw">if</i> <i class="pr">(</i><i class="id">success</i><i class="pr">)</i></div>
<div class="ln dl" style="top:309px;left:83px">{</div>
<div class="ln dl" style="top:331px;left:83px">    success = !!CopyFileW(TFile(pszPath).wpath(), TFile(bakPath).wpath(), false);</div>
<div class="ln dl" style="top:353px;left:83px">}</div>
<div class="ln" style="top:397px;left:83px"><i class="kw">if</i> <i class="pr">(</i><i class="op">!</i><i class="id">success</i><i class="pr">)</i></div>
<div class="ln" style="top:419px;left:83px"><i class="pr">{</i></div>
<div class="ln" style="top:441px;left:83px">    <i class="id">String</i> <i class="id">msg</i> <i class="op">=</i> <i class="id">strutils</i><i class="op">:</i><i class="op">:</i><i class="fn">format_string1</i><i class="pr">(</i></div>
<div class="ln" style="top:463px;left:83px">        <i class="fn">_</i><i class="pr">(</i><i class="st">&quot;Unable to backup original file:\n%1\n\nContinue?&quot;</i><i class="pr">)</i><i class="sc">,</i></div>
<div class="ln" style="top:485px;left:83px">        <i class="id">pszPath</i><i class="pr">)</i><i class="sc">;</i></div>
</div>
<div class="abs" style="left:151px;top:660px;width:214px;height:6px;background:#858585"></div>
<div class="abs" style="left:717px;top:660px;width:177px;height:6px;background:#858585"></div>
<div class="abs" style="left:1264px;top:467px;width:6px;height:21px;background:#858585"></div>
<div class="abs" style="left:130px;top:673px;width:1130px;height:1px;background:#e4e4e4"></div>
<div class="st1" style="left:132.8px;top:680px;letter-spacing:-0.55px;">Ln: 913</div>
<div class="st1" style="left:187.5px;top:680px;">Col: 5/28</div>
<div class="st1" style="left:254.4px;top:680px;">Ch: 2/19</div>
<div class="st1" style="left:455px;top:680px;">Windows-1252</div>
<div class="st1" style="left:609px;top:680px;">Unix</div>
<div class="st1" style="left:699.4px;top:680px;letter-spacing:-0.55px;">Ln: 913</div>
<div class="st1" style="left:754px;top:680px;">Col: 1/28</div>
<div class="st1" style="left:821px;top:680px;">Ch: 1/19</div>
<div class="st1" style="left:1023px;top:680px;">Windows-1252</div>
<div class="st1" style="left:1177.5px;top:680px;">Unix</div>
<div class="st1" style="left:954.6px;top:702px;">Difference 33 of 53</div>
<div class="frame"></div>
</div></body></html>
